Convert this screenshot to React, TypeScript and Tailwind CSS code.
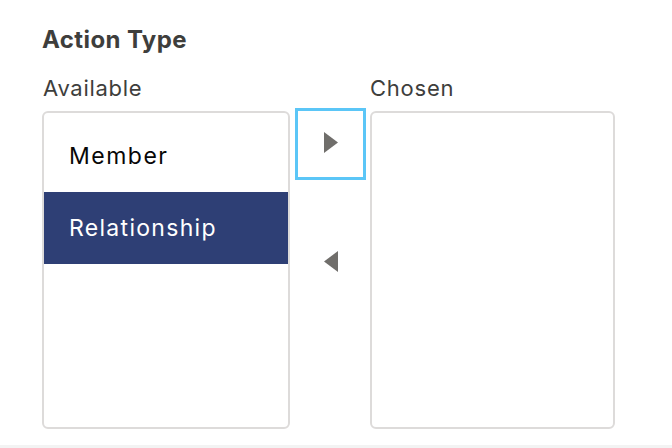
import React from "react";

const options = ["Member", "Relationship"];

function Triangle({ dir }: { dir: "left" | "right" }) {
  return (
    <svg width="14" height="21" viewBox="0 0 14 21">
      {dir === "right" ? (
        <polygon points="0,0 14,10.5 0,21" fill="#706e6b" />
      ) : (
        <polygon points="14,0 0,10.5 14,21" fill="#706e6b" />
      )}
    </svg>
  );
}

export default function App() {
  const selected = "Relationship";

  return (
    <div
      className="w-[672px] h-[448px] bg-white flex flex-col"
      style={{ fontFamily: "Inter, 'Noto Sans', sans-serif" }}
    >
      <div className="flex-1 pl-[42px] pt-[25px]">
        <h2 className="text-[24px] leading-[30px] font-bold tracking-[0.4px] text-[#3e3e3c]">
          Action Type
        </h2>

        <div className="flex mt-[19px]">
          {/* Available */}
          <div className="w-[248px] flex flex-col">
            <span className="text-[22px] leading-[28px] tracking-[0.7px] text-[#3e3e3c] pl-px">
              Available
            </span>
            <ul className="mt-[9px] h-[318px] border-2 border-[#dddbda] rounded-[6px] pt-[8px] overflow-hidden">
              {options.map((opt) => (
                <li
                  key={opt}
                  className={
                    opt === selected
                      ? "h-[72px] flex items-center pl-[25px] text-[23px] tracking-[1.3px] bg-[#2e3f75] text-white"
                      : "h-[71px] flex items-center pl-[25px] text-[23px] tracking-[1.5px] text-[#080707]"
                  }
                >
                  {opt}
                </li>
              ))}
            </ul>
          </div>

          {/* Move buttons */}
          <div className="w-[71px] ml-[5px] mr-[4px] pt-[34px] flex flex-col">
            <button className="h-[72px] w-[71px] border-[3px] border-[#5bc6f7] flex items-center justify-center pb-[4px] bg-white">
              <Triangle dir="right" />
            </button>
            <button className="h-[72px] w-[71px] mt-[45px] flex items-center justify-center">
              <Triangle dir="left" />
            </button>
          </div>

          {/* Chosen */}
          <div className="w-[245px] flex flex-col">
            <span className="text-[22px] leading-[28px] tracking-[0.75px] text-[#3e3e3c]">
              Chosen
            </span>
            <ul className="mt-[9px] h-[318px] border-2 border-[#dddbda] rounded-[6px]" />
          </div>
        </div>
      </div>
      <div className="h-[3px] bg-[#f3f3f3]" />
    </div>
  );
}
